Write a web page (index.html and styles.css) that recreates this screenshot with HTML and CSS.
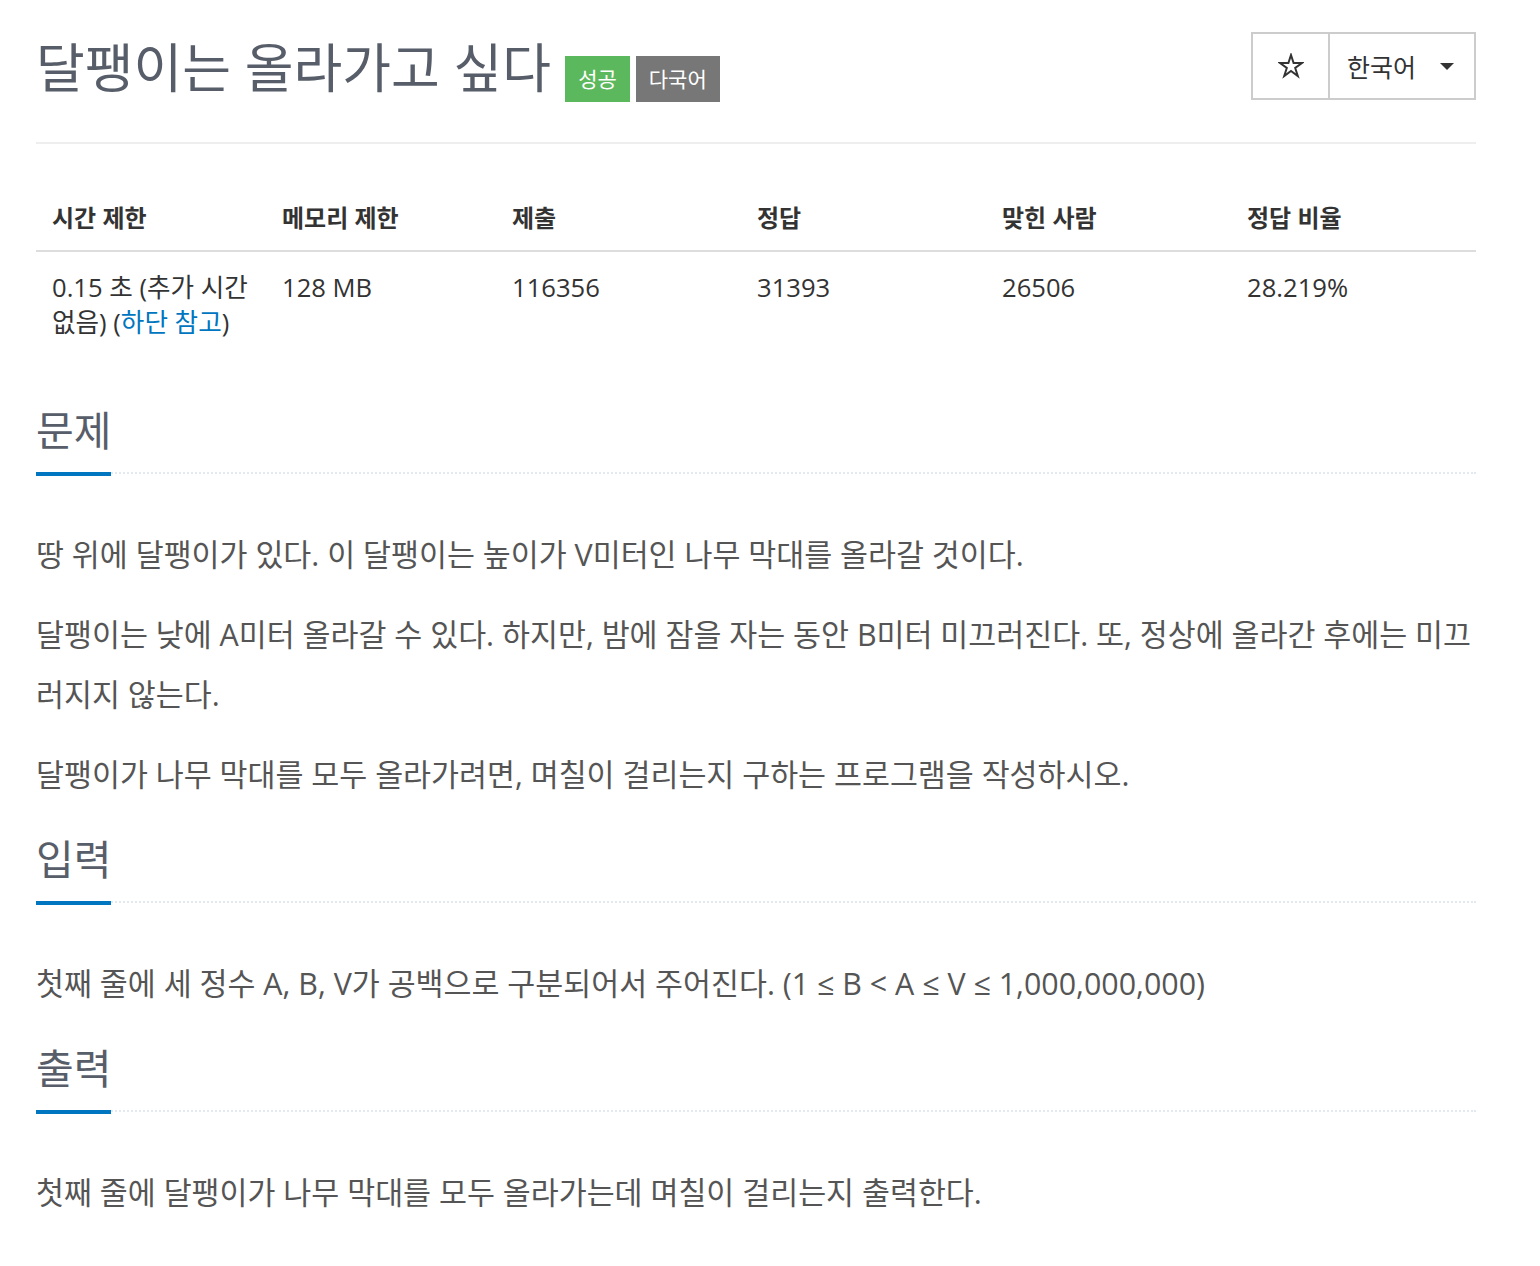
FILE: index.html
```html
<!DOCTYPE html>
<html lang="ko">
  <head>
    <meta charset="UTF-8" />
    <meta name="viewport" content="width=device-width, initial-scale=1.0" />
    <link rel="stylesheet" href="styles.css">
  </head>
  <body>
    <div id="container">
      <div class="page-header">
        <h1 class="title">
          <span id="problem_title">달팽이는 올라가고 싶다</span>
          <span class="label label-success">성공</span>
          <span class="label label-default">다국어</span>
        </h1>
        <div class="btn-group">
          <div class="btn btn-star">
            <svg width="26" height="26" viewBox="0 0 26 26">
              <polygon
                points="13,2 15.6,10 24,10 17.2,15 19.8,23 13,18 6.2,23 8.8,15 2,10 10.4,10"
                fill="none"
                stroke="#333"
                stroke-width="2"
                stroke-linejoin="miter"
              />
            </svg>
          </div>
          <div class="btn btn-lang">
            한국어
            <span class="caret"></span>
          </div>
        </div>
      </div>

      <table id="problem-info">
        <thead>
          <tr>
            <th class="col-time">시간 제한</th>
            <th class="col-mem">메모리 제한</th>
            <th class="col-sub">제출</th>
            <th class="col-ac">정답</th>
            <th class="col-user">맞힌 사람</th>
            <th>정답 비율</th>
          </tr>
        </thead>
        <tbody>
          <tr>
            <td><span>0.15 초 (추가 시간 없음) (<a href="#">하단 참고</a>)</span></td>
            <td>128 MB</td>
            <td>116356</td>
            <td>31393</td>
            <td>26506</td>
            <td>28.219%</td>
          </tr>
        </tbody>
      </table>

      <section class="problem-section">
        <div class="headline">
          <h2>문제</h2>
        </div>
        <div class="problem-text">
          <p>땅 위에 달팽이가 있다. 이 달팽이는 높이가 V미터인 나무 막대를 올라갈 것이다.</p>
          <p>달팽이는 낮에 A미터 올라갈 수 있다. 하지만, 밤에 잠을 자는 동안 B미터 미끄러진다. 또, 정상에 올라간 후에는 미끄러지지 않는다.</p>
          <p>달팽이가 나무 막대를 모두 올라가려면, 며칠이 걸리는지 구하는 프로그램을 작성하시오.</p>
        </div>
      </section>

      <section class="problem-section">
        <div class="headline">
          <h2>입력</h2>
        </div>
        <div class="problem-text">
          <p>첫째 줄에 세 정수 A, B, V가 공백으로 구분되어서 주어진다. (1 ≤ B &lt; A ≤ V ≤ 1,000,000,000)</p>
        </div>
      </section>

      <section class="problem-section">
        <div class="headline">
          <h2>출력</h2>
        </div>
        <div class="problem-text">
          <p>첫째 줄에 달팽이가 나무 막대를 모두 올라가는데 며칠이 걸리는지 출력한다.</p>
        </div>
      </section>
    </div>
  </body>
</html>
```

FILE: styles.css
```css
body {
  font-family: "Open Sans", "Noto Sans CJK KR", sans-serif;
  background-color: #fff;
  color: #333;
  margin: 0;
  padding: 0;
}

#container {
  width: 1440px;
  margin-left: 36px;
}

.page-header {
  display: flex;
  justify-content: space-between;
  align-items: flex-start;
  padding-top: 32px;
  padding-bottom: 38px;
  border-bottom: 2px solid #eee;
}

.title {
  margin: 0;
  display: flex;
  align-items: center;
  font-size: 53px;
  font-weight: 400;
  line-height: 72px;
  color: #575e69;
}

#problem_title {
  margin-right: 14px;
}

.label {
  display: inline-block;
  font-size: 21px;
  line-height: 46px;
  height: 46px;
  padding: 0 13px;
  color: #fff;
  margin-top: 22px;
  margin-right: 6px;
}

.label-success {
  background-color: #5cb85c;
}

.label-default {
  background-color: #777;
}

.btn-group {
  display: flex;
  border: 2px solid #ccc;
  height: 64px;
}

.btn {
  display: flex;
  align-items: center;
  justify-content: center;
  font-size: 25px;
  color: #333;
  cursor: pointer;
}

.btn-star {
  width: 75px;
  border-right: 2px solid #ccc;
}

.btn-lang {
  width: 144px;
  justify-content: flex-start;
  padding-left: 17px;
  box-sizing: border-box;
}

.caret {
  width: 0;
  height: 0;
  margin-left: 24px;
  border-left: 7px solid transparent;
  border-right: 7px solid transparent;
  border-top: 7px solid #333;
}

#problem-info {
  width: 100%;
  border-collapse: collapse;
  margin-top: 41px;
  margin-bottom: 54px;
}

#problem-info th {
  text-align: left;
  font-size: 24px;
  font-weight: 700;
  padding: 14px 16px 16px;
  border-bottom: 2px solid #ddd;
}

#problem-info td {
  vertical-align: top;
  font-size: 25.6px;
  line-height: 35px;
  padding: 18px 16px 8px;
}

.col-time,
.col-mem {
  width: 198px;
}

.col-sub,
.col-ac,
.col-user {
  width: 213px;
}

#problem-info a {
  color: #0076c0;
  text-decoration: none;
}

.problem-section + .problem-section {
  margin-top: 26px;
}

.headline {
  display: flex;
  border-bottom: 2px dotted #e4e9f0;
  margin-bottom: 51px;
}

.headline h2 {
  margin: 0 0 -4px;
  font-size: 41px;
  font-weight: 400;
  line-height: 56px;
  color: #575e69;
  padding-bottom: 14px;
  border-bottom: 4px solid #0076c0;
}

.problem-text {
  font-size: 30.4px;
  line-height: 60px;
  color: #555;
}

.problem-text p {
  margin: 0 0 20px;
}
```
